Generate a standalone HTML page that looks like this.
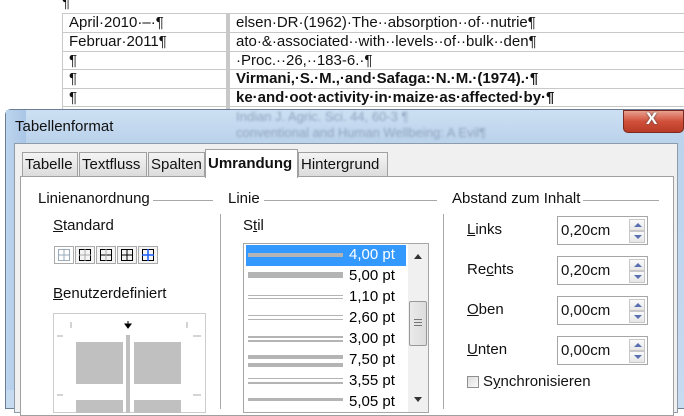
<!DOCTYPE html>
<html><head><meta charset="utf-8"><style>
*{margin:0;padding:0;box-sizing:border-box}
body{width:684px;height:405px;overflow:hidden;background:#fff;position:relative;font-family:"Liberation Sans",sans-serif}
.a{position:absolute}
.doc{font-size:15px;color:#111;white-space:nowrap}
.hl{background:#c8c8c8}
.t{font-size:15px;color:#111;white-space:nowrap}
.u{text-decoration:underline}
.ln{height:1px;background:#a8a8a8}
.spin{width:91px;height:29px;border:1px solid #a6a6a6;background:#fff}
.sb{position:absolute;left:71px;width:16px;height:12px;border:1px solid #c8c8c8;background:linear-gradient(#fafafa,#e6e6e6)}
.up{position:absolute;left:4px;top:3px;width:0;height:0;border:4px solid transparent;border-bottom:4px solid #5a6fb0;border-top:none}
.dn{position:absolute;left:4px;top:3px;width:0;height:0;border:4px solid transparent;border-top:4px solid #5a6fb0;border-bottom:none}
.row{position:absolute;left:2px;width:160px;height:21px}
.row span{position:absolute;left:103px;top:1px;font-size:15px}
.l{position:absolute;left:2px;width:95px;background:#b4b4b4}
</style></head><body>
<div class="a doc" style="left:62px;top:-6px">¶</div>
<div class="a hl" style="left:62px;top:13px;width:622px;height:1px"></div>
<div class="a hl" style="left:62px;top:32px;width:622px;height:1px"></div>
<div class="a hl" style="left:62px;top:51px;width:622px;height:1px"></div>
<div class="a hl" style="left:62px;top:69px;width:622px;height:1px"></div>
<div class="a hl" style="left:62px;top:88px;width:622px;height:1px"></div>
<div class="a hl" style="left:62px;top:106px;width:622px;height:1px"></div>
<div class="a hl" style="left:62px;top:13px;width:1px;height:100px"></div>
<div class="a hl" style="left:226px;top:13px;width:4px;height:100px"></div>
<div class="a doc" style="left:69px;top:14px">April·2010·–·¶</div>
<div class="a doc" style="left:69px;top:33px">Februar·2011¶</div>
<div class="a doc" style="left:69px;top:52px">¶</div>
<div class="a doc" style="left:69px;top:70px">¶</div>
<div class="a doc" style="left:69px;top:89px">¶</div>
<div class="a doc" style="left:236px;top:14px">elsen·DR·(1962)·The··absorption··of··nutrie¶</div>
<div class="a doc" style="left:236px;top:33px">ato·&amp;·associated··with··levels··of··bulk··den¶</div>
<div class="a doc" style="left:236px;top:52px">·Proc.··26,··183-6.·¶</div>
<div class="a doc" style="left:236px;top:70px;font-weight:bold">Virmani,·S.·M.,·and·Safaga:·N.·M.·(1974).·¶</div>
<div class="a doc" style="left:236px;top:89px;font-weight:bold">ke·and·oot·activity·in·maize·as·affected·by·¶</div>
<div class="a" style="left:5px;top:109px;width:685px;height:300px;border:1px solid #6a7f96;border-radius:6px 6px 0 0;background:linear-gradient(180deg,#cde0f3 0px,#bcd3ec 30px,#c6daf0 300px)"></div>
<div class="a" style="left:6px;top:110px;width:20px;height:280px;background:linear-gradient(90deg,#bcd4ee,#aac6e6)"></div>
<div class="a doc" style="left:236px;top:109px;color:#8ea3bd;filter:blur(1px);font-size:13px">Indian J. Agric. Sci. 44, 60-3 ¶</div>
<div class="a doc" style="left:236px;top:125px;color:#8ea3bd;filter:blur(1px);font-size:13px">conventional and Human Wellbeing: A Evil¶</div>
<div class="a t" style="left:15px;top:118px">Tabellenformat</div>
<div class="a" style="left:623px;top:110px;width:61px;height:23px;border:1px solid #7a2a20;border-radius:0 0 5px 5px;background:linear-gradient(#e8a090,#d0503a 50%,#b83a26)"></div>
<div class="a" style="left:646px;top:109px;color:#fff;font:bold 17px 'Liberation Sans',sans-serif;text-shadow:0 0 2px #444">X</div>
<div class="a" style="left:14px;top:143px;width:664px;height:270px;background:#f0f0f0;border:1px solid #8e9bab"></div>
<div class="a" style="left:20px;top:176px;width:654px;height:240px;background:#fff;border:1px solid #a0a0a0"></div>
<div class="a t" style="left:22px;top:152px;width:56px;height:25px;border:1px solid #a0a0a0;background:linear-gradient(#f4f4f4,#dcdcdc);padding:3px 0 0 2px">Tabelle</div>
<div class="a t" style="left:79px;top:152px;width:68px;height:25px;border:1px solid #a0a0a0;background:linear-gradient(#f4f4f4,#dcdcdc);padding:3px 0 0 2px">Textfluss</div>
<div class="a t" style="left:148px;top:152px;width:57px;height:25px;border:1px solid #a0a0a0;background:linear-gradient(#f4f4f4,#dcdcdc);padding:3px 0 0 2px">Spalten</div>
<div class="a t" style="left:205px;top:149px;width:93px;height:29px;border:1px solid #a0a0a0;border-bottom:none;background:#fff;padding:5px 0 0 2px;font-weight:bold">Umrandung</div>
<div class="a t" style="left:298px;top:152px;width:90px;height:25px;border:1px solid #a0a0a0;background:linear-gradient(#f4f4f4,#dcdcdc);padding:3px 0 0 2px">Hintergrund</div>
<div class="a t" style="left:38px;top:190px">Linienanordnung</div>
<div class="a ln" style="left:153px;top:200px;width:60px"></div>
<div class="a t" style="left:228px;top:190px">Linie</div>
<div class="a ln" style="left:264px;top:200px;width:173px"></div>
<div class="a t" style="left:452px;top:190px">Abstand zum Inhalt</div>
<div class="a ln" style="left:583px;top:200px;width:76px"></div>
<div class="a" style="left:220px;top:214px;width:1px;height:195px;background:#a8a8a8"></div>
<div class="a" style="left:443px;top:214px;width:1px;height:195px;background:#a8a8a8"></div>
<div class="a t" style="left:53px;top:217px"><span class="u">S</span>tandard</div>
<div class="a" style="left:54px;top:246px;width:104px;height:18px">
<svg width="104" height="18">
<rect x="0.5" y="0.5" width="19" height="17" fill="#fff" stroke="#555" stroke-dasharray="1 1"/>
<rect x="4.5" y="3.5" width="11" height="11" fill="none" stroke="#9ab"/><line x1="10" y1="3" x2="10" y2="15" stroke="#9ab"/><line x1="4" y1="9" x2="16" y2="9" stroke="#9ab"/>
<g transform="translate(21,0)"><rect x="0.5" y="0.5" width="19" height="17" fill="#f4f4f4" stroke="#aaa"/><rect x="4.5" y="3.5" width="11" height="11" fill="none" stroke="#000"/><line x1="10" y1="3" x2="10" y2="15" stroke="#aaa"/><line x1="4" y1="9" x2="16" y2="9" stroke="#aaa"/></g>
<g transform="translate(42,0)"><rect x="0.5" y="0.5" width="19" height="17" fill="#f4f4f4" stroke="#aaa"/><rect x="4.5" y="3.5" width="11" height="11" fill="none" stroke="#000"/><line x1="4" y1="9" x2="16" y2="9" stroke="#000"/><line x1="10" y1="3" x2="10" y2="15" stroke="#aaa"/></g>
<g transform="translate(63,0)"><rect x="0.5" y="0.5" width="19" height="17" fill="#f4f4f4" stroke="#aaa"/><rect x="4.5" y="3.5" width="11" height="11" fill="none" stroke="#000"/><line x1="10" y1="3" x2="10" y2="15" stroke="#000"/><line x1="4" y1="9" x2="16" y2="9" stroke="#000"/></g>
<g transform="translate(84,0)"><rect x="0.5" y="0.5" width="19" height="17" fill="#f4f4f4" stroke="#aaa"/><rect x="4.5" y="3.5" width="11" height="11" fill="none" stroke="#000"/><line x1="10" y1="3" x2="10" y2="15" stroke="#1a5cff" stroke-width="1.5"/><line x1="4" y1="9" x2="16" y2="9" stroke="#1a5cff" stroke-width="1.5"/></g>
</svg></div>
<div class="a t" style="left:53px;top:285px"><span class="u">B</span>enutzerdefiniert</div>
<div class="a" style="left:53px;top:313px;width:153px;height:100px;border:1px solid #ccc;background:#fff">
<svg width="153" height="100" style="position:absolute;left:-1px;top:-1px">
<line x1="18" y1="9" x2="18" y2="15" stroke="#aaa"/><line x1="134" y1="9" x2="134" y2="15" stroke="#aaa"/>
<line x1="4" y1="23" x2="10" y2="23" stroke="#aaa"/><line x1="140" y1="23" x2="148" y2="23" stroke="#aaa"/>
<line x1="4" y1="82" x2="10" y2="82" stroke="#aaa"/><line x1="140" y1="82" x2="148" y2="82" stroke="#aaa"/>
<path d="M75 8 V12 M72 11 L75 15 L78 11 Z" stroke="#000" fill="#000"/>
<rect x="23" y="29" width="47" height="42" fill="#c0c0c0"/><rect x="81" y="29" width="47" height="42" fill="#c0c0c0"/>
<rect x="23" y="87" width="47" height="20" fill="#c0c0c0"/><rect x="81" y="87" width="47" height="20" fill="#c0c0c0"/>
<rect x="73" y="22" width="4" height="80" fill="#c0c0c0"/>
</svg></div>
<div class="a t" style="left:243px;top:217px">S<span class="u">t</span>il</div>
<div class="a" style="left:243px;top:243px;width:186px;height:170px;border:1px solid #a6a6a6;background:#fff;overflow:hidden">
<div class="row" style="top:1px;background:#3399ff"><div class="l" style="top:8px;height:4px"></div><span style="color:#fff">4,00 pt</span></div>
<div class="row" style="top:22px"><div class="l" style="top:6px;height:6px"></div><span>5,00 pt</span></div>
<div class="row" style="top:43px"><div class="l" style="top:8px;height:1px"></div><div class="l" style="top:11px;height:1px"></div><span>1,10 pt</span></div>
<div class="row" style="top:64px"><div class="l" style="top:7px;height:1px"></div><div class="l" style="top:11px;height:1px"></div><span>2,60 pt</span></div>
<div class="row" style="top:85px"><div class="l" style="top:7px;height:2px"></div><div class="l" style="top:11px;height:2px"></div><span>3,00 pt</span></div>
<div class="row" style="top:106px"><div class="l" style="top:5px;height:4px"></div><div class="l" style="top:13px;height:4px"></div><span>7,50 pt</span></div>
<div class="row" style="top:127px"><div class="l" style="top:7px;height:1px"></div><div class="l" style="top:11px;height:2px"></div><span>3,55 pt</span></div>
<div class="row" style="top:148px"><div class="l" style="top:6px;height:3px"></div><span>5,05 pt</span></div>
<div class="a" style="left:164px;top:0;width:20px;height:170px;background:#f0f0f0"></div>
<div class="a" style="left:170px;top:10px;width:0;height:0;border:4px solid transparent;border-bottom:5px solid #333;border-top:none"></div>
<div class="a" style="left:170px;top:153px;width:0;height:0;border:4px solid transparent;border-top:5px solid #333;border-bottom:none"></div>
<div class="a" style="left:165px;top:57px;width:18px;height:45px;border:1px solid #999;border-radius:2px;background:linear-gradient(90deg,#eaeaea,#dcdcdc)"></div>
<div class="a" style="left:170px;top:75px;width:8px;height:7px;border-top:1px solid #777;border-bottom:1px solid #777"></div>
<div class="a" style="left:170px;top:78px;width:8px;height:1px;background:#777"></div>
</div>
<div class="a t" style="left:467px;top:221px"><span class="u">L</span>inks</div>
<div class="a t" style="left:467px;top:261px">Re<span class="u">c</span>hts</div>
<div class="a t" style="left:467px;top:301px"><span class="u">O</span>ben</div>
<div class="a t" style="left:467px;top:341px"><span class="u">U</span>nten</div>
<div class="a spin" style="left:557px;top:216px"><div class="t" style="position:absolute;left:3px;top:5px">0,20cm</div><div class="sb" style="top:2px"><div class="up"></div></div><div class="sb" style="top:14px"><div class="dn"></div></div></div>
<div class="a spin" style="left:557px;top:256px"><div class="t" style="position:absolute;left:3px;top:5px">0,20cm</div><div class="sb" style="top:2px"><div class="up"></div></div><div class="sb" style="top:14px"><div class="dn"></div></div></div>
<div class="a spin" style="left:557px;top:296px"><div class="t" style="position:absolute;left:3px;top:5px">0,00cm</div><div class="sb" style="top:2px"><div class="up"></div></div><div class="sb" style="top:14px"><div class="dn"></div></div></div>
<div class="a spin" style="left:557px;top:336px"><div class="t" style="position:absolute;left:3px;top:5px">0,00cm</div><div class="sb" style="top:2px"><div class="up"></div></div><div class="sb" style="top:14px"><div class="dn"></div></div></div>
<div class="a" style="left:467px;top:376px;width:12px;height:12px;border:1px solid #8e8f8f;background:linear-gradient(135deg,#ddd,#fafafa)"></div>
<div class="a t" style="left:483px;top:373px">S<span class="u">y</span>nchronisieren</div>
</body></html>
